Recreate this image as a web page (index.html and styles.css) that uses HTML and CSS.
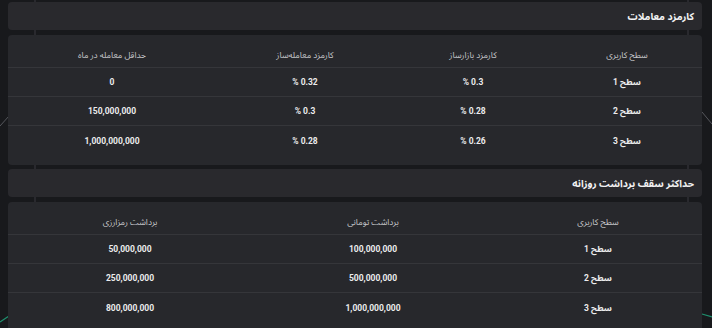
FILE: index.html
```html
<!DOCTYPE html>
<html lang="fa" dir="rtl">
<head>
<meta charset="utf-8">
<title>کارمزد معاملات</title>
<link rel="stylesheet" href="styles.css">
</head>
<body>
<svg class="chart-bg" width="712" height="328" viewBox="0 0 712 328" aria-hidden="true">
  <line x1="35" y1="0" x2="35" y2="328" stroke="#3a3b40" stroke-width="1"/>
  <line x1="688" y1="0" x2="688" y2="328" stroke="#3a3b40" stroke-width="1"/>
  <polyline points="0,126 9,116" fill="none" stroke="#55575c" stroke-width="1"/>
  <polyline points="0,322 9,316" fill="none" stroke="#1f8f6e" stroke-width="1.2"/>
  <polyline points="702,112 712,124" fill="none" stroke="#55575c" stroke-width="1"/>
  <polyline points="702,314 712,317" fill="none" stroke="#1f8f6e" stroke-width="1.2"/>
</svg>
<main class="page">
  <section class="block">
    <header class="card-title">کارمزد معاملات</header>
    <div class="card">
      <div class="grid fees">
        <div class="row head"><span>سطح کاربری</span><span>کارمزد بازارساز</span><span>کارمزد معامله‌ساز</span><span>حداقل معامله در ماه</span></div>
        <div class="row"><span>سطح 1</span><span>0.3 %</span><span>0.32 %</span><span>0</span></div>
        <div class="row"><span>سطح 2</span><span>0.28 %</span><span>0.3 %</span><span>150,000,000</span></div>
        <div class="row last"><span>سطح 3</span><span>0.26 %</span><span>0.28 %</span><span>1,000,000,000</span></div>
      </div>
    </div>
  </section>
  <section class="block">
    <header class="card-title">حداکثر سقف برداشت روزانه</header>
    <div class="card">
      <div class="grid limits">
        <div class="row head"><span>سطح کاربری</span><span>برداشت تومانی</span><span>برداشت رمزارزی</span></div>
        <div class="row"><span>سطح 1</span><span>100,000,000</span><span>50,000,000</span></div>
        <div class="row"><span>سطح 2</span><span>500,000,000</span><span>250,000,000</span></div>
        <div class="row last"><span>سطح 3</span><span>1,000,000,000</span><span>800,000,000</span></div>
      </div>
    </div>
  </section>
</main>
</body>
</html>
```
FILE: styles.css
```css
html, body {
  margin: 0;
  padding: 0;
  background: #18191c;
  overflow: hidden;
}
body {
  width: 712px;
  height: 328px;
  position: relative;
  font-family: Roboto, "Noto Sans Arabic", "Noto Sans", "DejaVu Sans", sans-serif;
  color: #e9e9ea;
}
.chart-bg {
  position: absolute;
  left: 0;
  top: 0;
  z-index: 0;
}
.page {
  position: relative;
  z-index: 1;
  width: 694px;
  margin: 0 10px 0 8px;
  padding-top: 2px;
  display: flex;
  flex-direction: column;
  gap: 4px;
}
.block {
  display: flex;
  flex-direction: column;
  gap: 5px;
}
.card-title {
  height: 28px;
  box-sizing: border-box;
  padding: 0 8px;
  display: flex;
  align-items: center;
  background: #29292d;
  border-radius: 4px;
  font-size: 10px;
  font-weight: 700;
  color: #f2f2f3;
}
.card {
  background: #27282c;
  border-radius: 4px;
  padding: 9px 0 10px;
}
.grid {
  display: flex;
  flex-direction: column;
}
.row {
  display: grid;
  height: 29px;
  box-sizing: border-box;
  border-bottom: 1px solid #35363a;
  align-items: center;
  font-size: 8.5px;
  font-weight: 700;
  color: #ececed;
}
.fees .row { grid-template-columns: 150px 158px 178px 1fr; }
.limits .row { grid-template-columns: 208px 242px 1fr; }
.row > span {
  text-align: center;
}
.row.head {
  height: 24px;
  padding-bottom: 2px;
  font-weight: 400;
  color: #c6c7ca;
}
.row.last {
  border-bottom: none;
}
```
